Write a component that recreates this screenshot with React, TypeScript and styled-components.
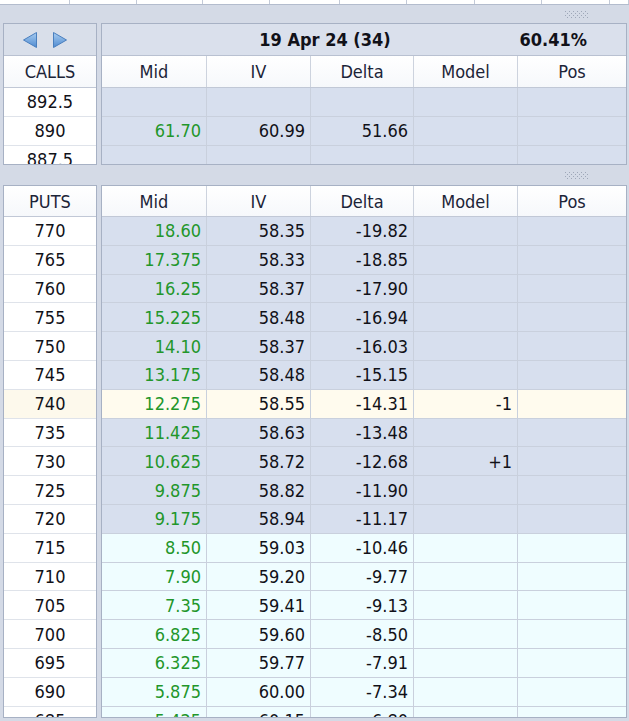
import React from 'react';
import styled, { createGlobalStyle } from 'styled-components';

const GlobalStyle = createGlobalStyle`
  * { box-sizing: border-box; }
  body {
    margin: 0;
    background: #d4dae6;
    font-family: "DejaVu Sans Condensed", "DejaVu Sans", Verdana, sans-serif;
    font-stretch: condensed;
    font-size: 18px;
    color: #111118;
  }
`;

type Tone = 'blue' | 'cream' | 'cyan';

const toneBg: Record<Tone, string> = {
  blue: '#d7dfee',
  cream: '#fffbee',
  cyan: '#effdff',
};

const ROW_H = 28.8;

const Page = styled.div`
  width: 629px;
  height: 721px;
  overflow: hidden;
  background: #d4dae6;
`;

const TopStrip = styled.div`
  display: flex;
  height: 5px;
  background: #ffffff;
  border-bottom: 1px solid #b3bccd;
`;

const StripCell = styled.div<{ $w: number }>`
  flex: 0 0 ${(p) => p.$w}px;
  border-right: 1px solid #c3cad8;
`;

const Splitter = styled.div<{ $h: number }>`
  height: ${(p) => p.$h}px;
  display: flex;
  align-items: center;
  justify-content: flex-end;
  padding-right: 40px;
`;

const Section = styled.div<{ $h: number }>`
  height: ${(p) => p.$h}px;
  display: flex;
  gap: 4px;
  padding-left: 3px;
`;

const StrikePanel = styled.div`
  flex: 0 0 94px;
  border: 1px solid #a7b1c4;
  background: #ffffff;
  overflow: hidden;
`;

const GridPanel = styled.div`
  flex: 0 0 526px;
  border: 1px solid #a7b1c4;
  background: #d7dfee;
  overflow: hidden;
`;

const ArrowBand = styled.div`
  height: 32px;
  display: flex;
  align-items: center;
  justify-content: center;
  gap: 14px;
  padding-right: 10px;
  background: #d9dfea;
  border-bottom: 1px solid #b9c1d1;
`;

const Band = styled.div`
  height: 32px;
  display: flex;
  align-items: center;
  padding-left: 73px;
  padding-right: 39px;
  font-weight: bold;
  font-size: 18px;
  background: #dae0ec;
  border-bottom: 1px solid #b9c1d1;
`;

const BandTitle = styled.div`
  width: 300px;
  text-align: center;
`;

const BandValue = styled.div`
  flex: 1;
  text-align: right;
`;

const HeadCell = styled.div<{ $h: number }>`
  height: ${(p) => p.$h}px;
  display: flex;
  align-items: center;
  justify-content: center;
  color: #1c2438;
  background: linear-gradient(#ffffff, #f6f8fb);
  border-bottom: 1px solid #c1c8d6;
`;

const HeaderRow = styled.div<{ $h: number }>`
  display: grid;
  grid-template-columns: 105px 104px 103px 104px 1fr;
  height: ${(p) => p.$h}px;
  color: #1c2438;
  background: linear-gradient(#ffffff, #f6f8fb);
  border-bottom: 1px solid #c1c8d6;
`;

const HeaderCell = styled.div`
  display: flex;
  align-items: center;
  justify-content: center;
  border-right: 1px solid #cdd3de;
  &:last-child { border-right: none; }
`;

const StrikeCell = styled.div<{ $tone: Tone }>`
  height: ${ROW_H}px;
  display: flex;
  align-items: center;
  justify-content: center;
  background: ${(p) => (p.$tone === 'cream' ? '#fdf9ec' : '#ffffff')};
  border-bottom: 1px solid #dfe3ea;
`;

const DataRow = styled.div<{ $tone: Tone }>`
  display: grid;
  grid-template-columns: 105px 104px 103px 104px 1fr;
  height: ${ROW_H}px;
  background: ${(p) => toneBg[p.$tone]};
  border-bottom: 1px solid #c9d0dd;
`;

const DataCell = styled.div<{ $green?: boolean }>`
  display: flex;
  align-items: center;
  justify-content: flex-end;
  padding-right: 5px;
  color: ${(p) => (p.$green ? '#22962a' : '#111118')};
  border-right: 1px solid #c9d0dd;
  &:last-child { border-right: none; }
`;

const Arrow = ({ dir }: { dir: 'left' | 'right' }) => (
  <svg width="16" height="18" viewBox="0 0 16 18">
    <defs>
      <linearGradient id={`ag-${dir}`} x1="0" y1="0" x2="0" y2="1">
        <stop offset="0" stopColor="#a9cdf1" />
        <stop offset="1" stopColor="#4f8ad0" />
      </linearGradient>
    </defs>
    <path
      d={dir === 'left' ? 'M14.5 1.5 L1.5 9 L14.5 16.5 Z' : 'M1.5 1.5 L14.5 9 L1.5 16.5 Z'}
      fill={`url(#ag-${dir})`}
      stroke="#4a7fbe"
      strokeWidth="1"
      strokeLinejoin="round"
    />
  </svg>
);

const Grip = () => (
  <svg width="24" height="7" viewBox="0 0 24 7">
    {Array.from({ length: 4 }).map((_, r) =>
      Array.from({ length: 12 }).map((__, c) =>
        (r + c) % 2 === 0 ? (
          <rect key={`${r}-${c}`} x={c * 2} y={r * 2} width="1" height="1" fill="#9ea7b8" />
        ) : null,
      ),
    )}
  </svg>
);

interface Row {
  strike: string;
  mid?: string;
  iv?: string;
  delta?: string;
  model?: string;
  tone: Tone;
}

const calls: Row[] = [
  { strike: '892.5', tone: 'blue' },
  { strike: '890', mid: '61.70', iv: '60.99', delta: '51.66', tone: 'blue' },
  { strike: '887.5', tone: 'blue' },
];

const puts: Row[] = [
  { strike: '770', mid: '18.60', iv: '58.35', delta: '-19.82', tone: 'blue' },
  { strike: '765', mid: '17.375', iv: '58.33', delta: '-18.85', tone: 'blue' },
  { strike: '760', mid: '16.25', iv: '58.37', delta: '-17.90', tone: 'blue' },
  { strike: '755', mid: '15.225', iv: '58.48', delta: '-16.94', tone: 'blue' },
  { strike: '750', mid: '14.10', iv: '58.37', delta: '-16.03', tone: 'blue' },
  { strike: '745', mid: '13.175', iv: '58.48', delta: '-15.15', tone: 'blue' },
  { strike: '740', mid: '12.275', iv: '58.55', delta: '-14.31', model: '-1', tone: 'cream' },
  { strike: '735', mid: '11.425', iv: '58.63', delta: '-13.48', tone: 'blue' },
  { strike: '730', mid: '10.625', iv: '58.72', delta: '-12.68', model: '+1', tone: 'blue' },
  { strike: '725', mid: '9.875', iv: '58.82', delta: '-11.90', tone: 'blue' },
  { strike: '720', mid: '9.175', iv: '58.94', delta: '-11.17', tone: 'blue' },
  { strike: '715', mid: '8.50', iv: '59.03', delta: '-10.46', tone: 'cyan' },
  { strike: '710', mid: '7.90', iv: '59.20', delta: '-9.77', tone: 'cyan' },
  { strike: '705', mid: '7.35', iv: '59.41', delta: '-9.13', tone: 'cyan' },
  { strike: '700', mid: '6.825', iv: '59.60', delta: '-8.50', tone: 'cyan' },
  { strike: '695', mid: '6.325', iv: '59.77', delta: '-7.91', tone: 'cyan' },
  { strike: '690', mid: '5.875', iv: '60.00', delta: '-7.34', tone: 'cyan' },
  { strike: '685', mid: '5.425', iv: '60.15', delta: '-6.80', tone: 'cyan' },
];

const columns = ['Mid', 'IV', 'Delta', 'Model', 'Pos'];
const stripWidths = [70, 67, 66, 67, 70, 67, 68, 67, 68, 19];

const Rows = ({ rows }: { rows: Row[] }) => (
  <>
    {rows.map((r) => (
      <DataRow key={r.strike} $tone={r.tone}>
        <DataCell $green>{r.mid}</DataCell>
        <DataCell>{r.iv}</DataCell>
        <DataCell>{r.delta}</DataCell>
        <DataCell>{r.model}</DataCell>
        <DataCell />
      </DataRow>
    ))}
  </>
);

const Strikes = ({ rows }: { rows: Row[] }) => (
  <>
    {rows.map((r) => (
      <StrikeCell key={r.strike} $tone={r.tone}>
        {r.strike}
      </StrikeCell>
    ))}
  </>
);

const App: React.FC = () => (
  <Page>
    <GlobalStyle />
    <TopStrip>
      {stripWidths.map((w, i) => (
        <StripCell key={i} $w={w} />
      ))}
    </TopStrip>
    <Splitter $h={18}>
      <Grip />
    </Splitter>

    <Section $h={142}>
      <StrikePanel>
        <ArrowBand>
          <Arrow dir="left" />
          <Arrow dir="right" />
        </ArrowBand>
        <HeadCell $h={32}>CALLS</HeadCell>
        <Strikes rows={calls} />
      </StrikePanel>
      <GridPanel>
        <Band>
          <BandTitle>19 Apr 24 (34)</BandTitle>
          <BandValue>60.41%</BandValue>
        </Band>
        <HeaderRow $h={32}>
          {columns.map((c) => (
            <HeaderCell key={c}>{c}</HeaderCell>
          ))}
        </HeaderRow>
        <Rows rows={calls} />
      </GridPanel>
    </Section>

    <Splitter $h={20}>
      <Grip />
    </Splitter>

    <Section $h={533}>
      <StrikePanel>
        <HeadCell $h={31}>PUTS</HeadCell>
        <Strikes rows={puts} />
      </StrikePanel>
      <GridPanel>
        <HeaderRow $h={31}>
          {columns.map((c) => (
            <HeaderCell key={c}>{c}</HeaderCell>
          ))}
        </HeaderRow>
        <Rows rows={puts} />
      </GridPanel>
    </Section>
  </Page>
);

export default App;
